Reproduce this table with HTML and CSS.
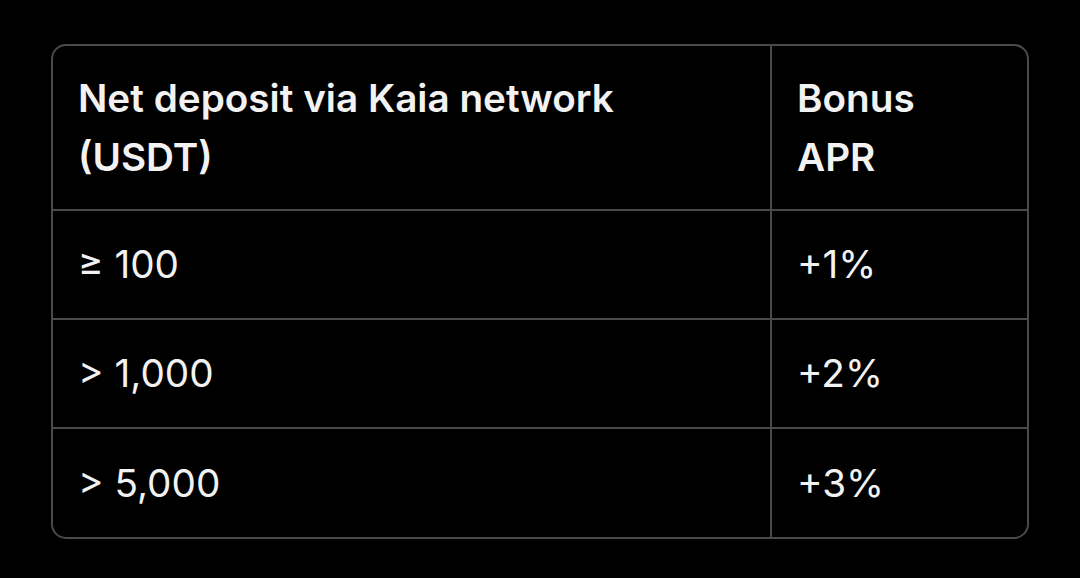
FILE: index.html
```html
<!DOCTYPE html>
<html>
<head>
<meta charset="utf-8">
<link rel="stylesheet" href="styles.css">
</head>
<body>
<div class="frame">
  <table class="bonus">
    <thead>
      <tr><th class="c1">Net deposit via Kaia network (USDT)</th><th class="c2">Bonus APR</th></tr>
    </thead>
    <tbody>
      <tr><td class="c1">≥ 100</td><td class="c2">+1%</td></tr>
      <tr><td class="c1">&gt; 1,000</td><td class="c2">+2%</td></tr>
      <tr><td class="c1">&gt; 5,000</td><td class="c2">+3%</td></tr>
    </tbody>
  </table>
</div>
</body>
</html>
```
FILE: styles.css
```css
html, body {
  margin: 0;
  background: #000;
}
body {
  padding: 44px 51px 0 51px;
  font-family: Inter, "Noto Sans", sans-serif;
  color: #f2f2f2;
}
.frame {
  width: 978px;
  box-sizing: border-box;
  border: 2px solid #4a4a4a;
  border-radius: 15px;
  overflow: hidden;
}
.bonus {
  width: 100%;
  border-collapse: collapse;
}
.bonus th, .bonus td {
  text-align: left;
  padding: 0 25px;
  font-size: 38.7px;
  line-height: 59px;
  vertical-align: middle;
}
.bonus th {
  font-weight: 600;
  height: 164px;
  box-sizing: border-box;
}
.bonus td {
  font-weight: 400;
  height: 109px;
  box-sizing: border-box;
  border-top: 2px solid #4a4a4a;
}
.bonus .c1 {
  width: 718px;
  box-sizing: border-box;
  border-right: 2px solid #4a4a4a;
}
.bonus th.c1 {
  padding-right: 140px;
}
.bonus th.c2 {
  padding-right: 100px;
}
```
